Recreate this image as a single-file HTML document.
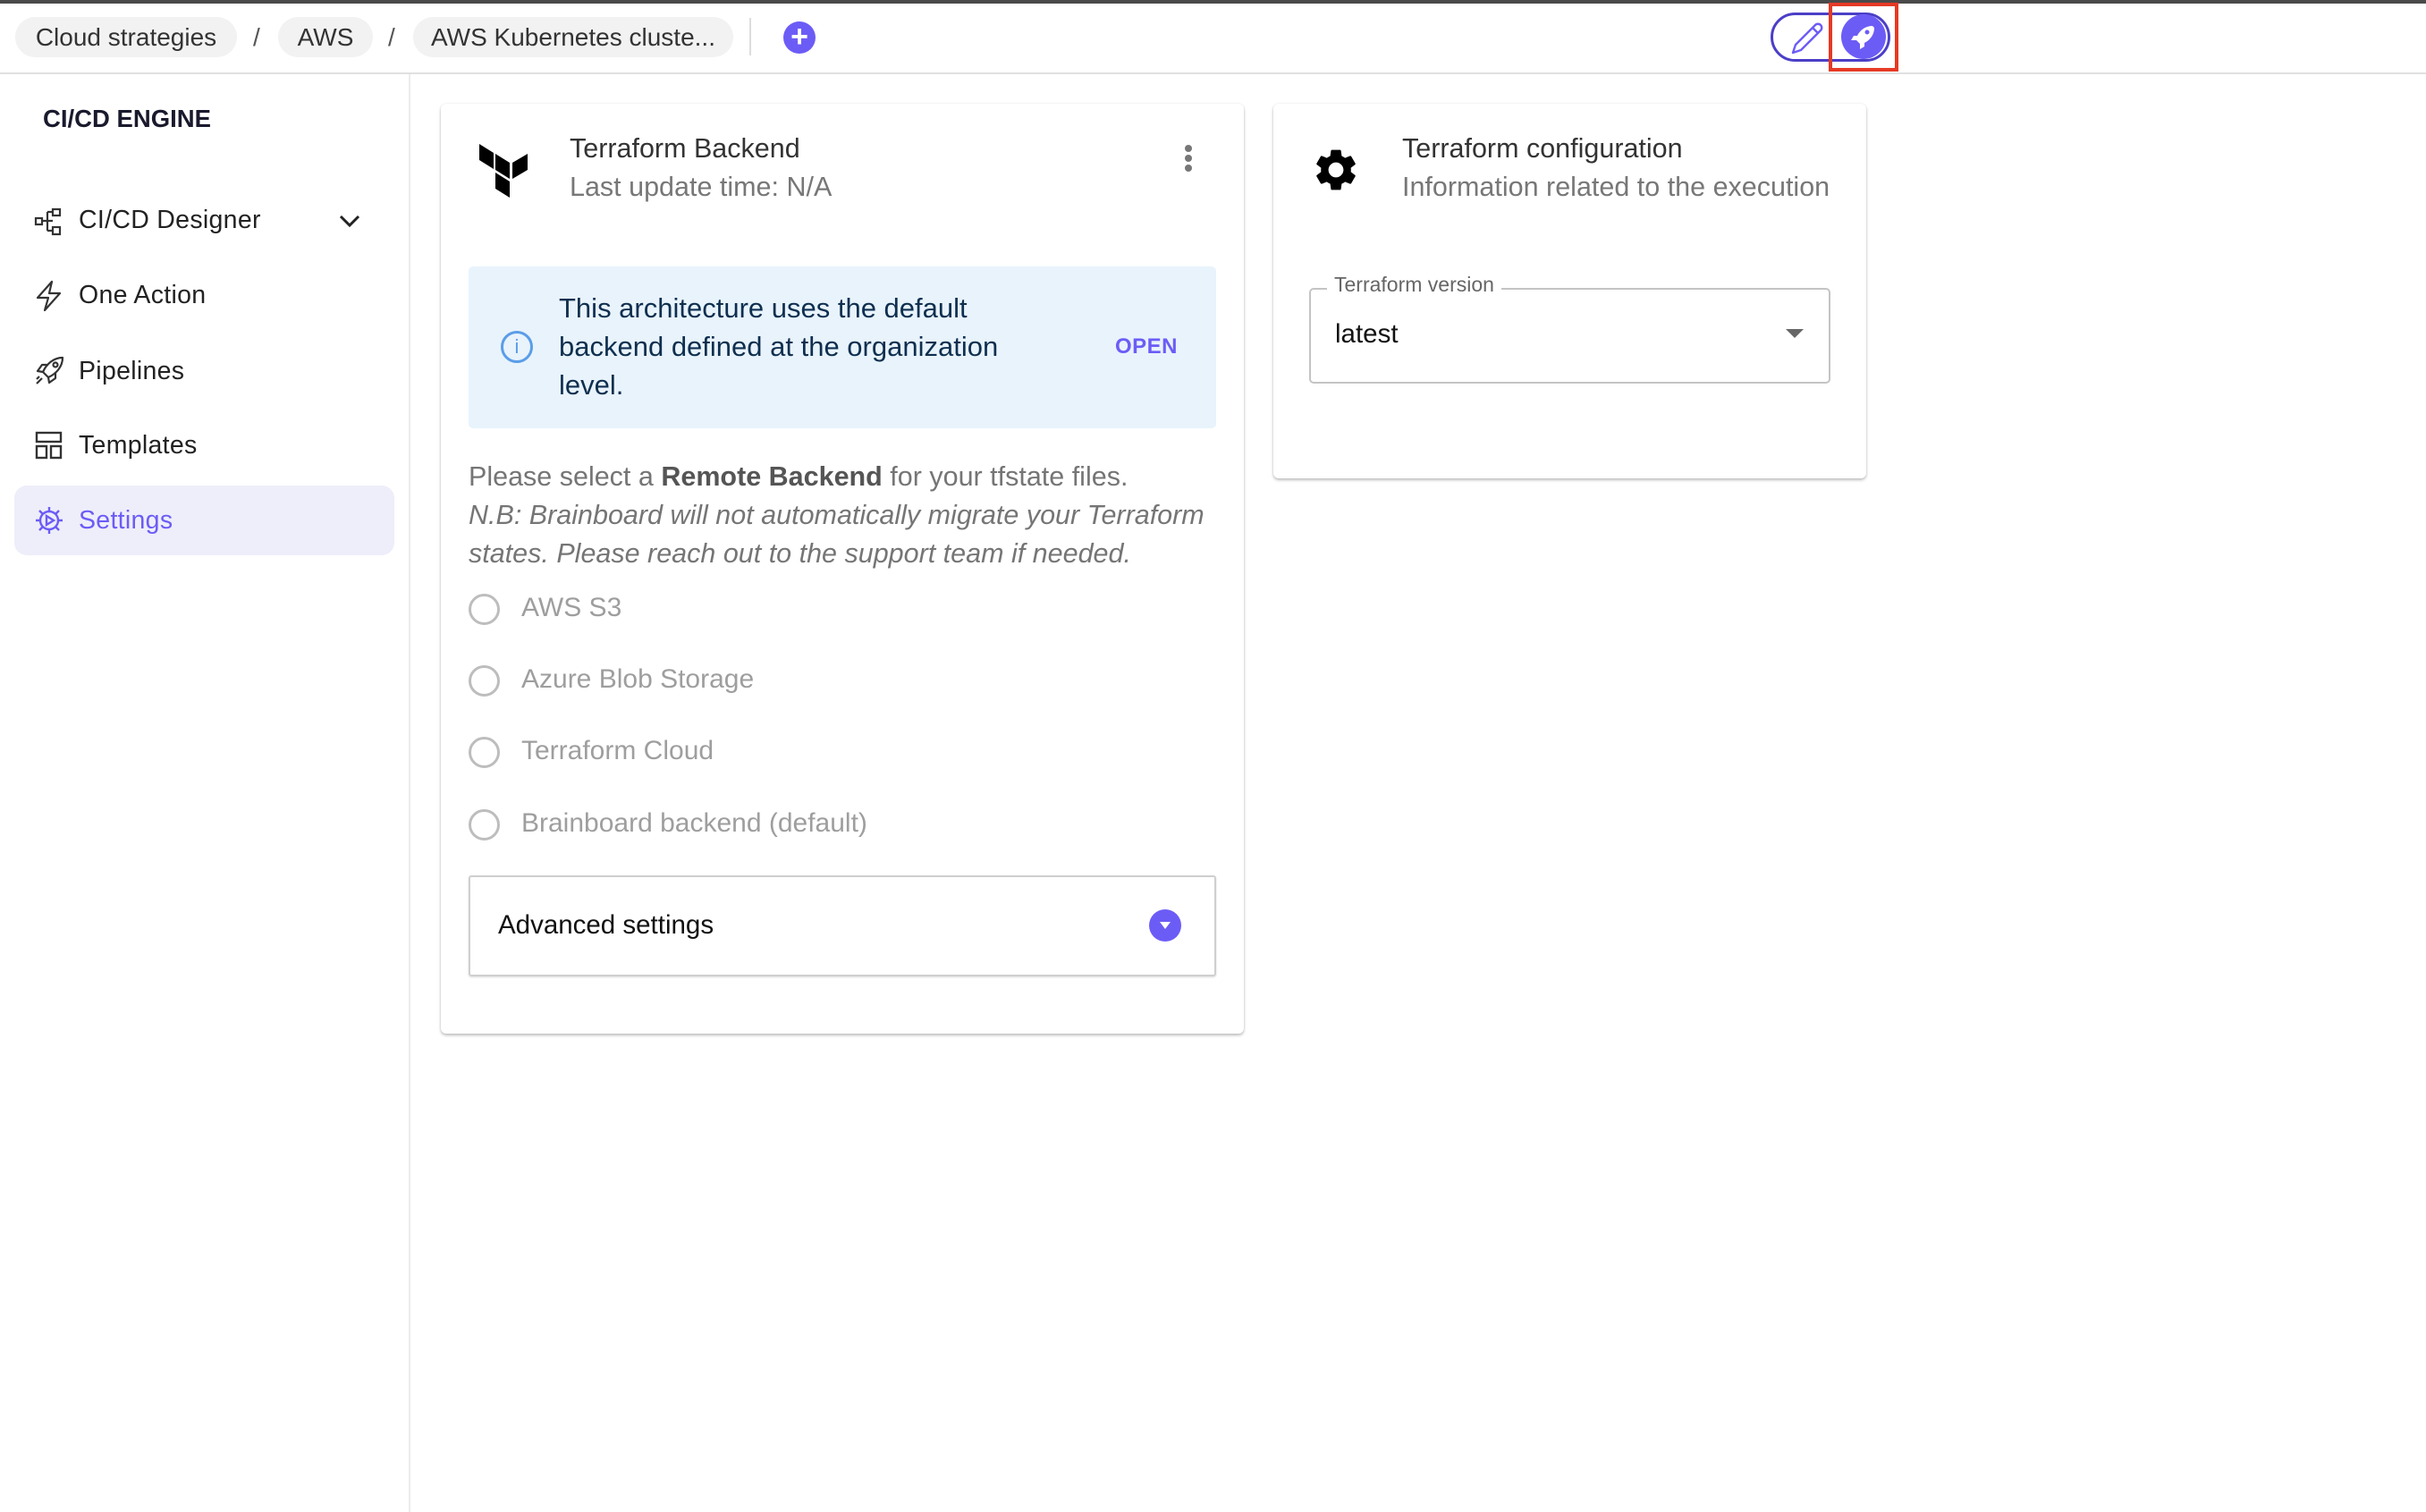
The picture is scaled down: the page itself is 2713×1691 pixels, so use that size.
<!DOCTYPE html>
<html><head><meta charset="utf-8"><style>
*{margin:0;padding:0;box-sizing:border-box}
body{width:2713px;height:1691px;background:#fff;font-family:"Liberation Sans",sans-serif;position:relative;overflow:hidden;color:#222}
.a{position:absolute;white-space:nowrap}
.pill{position:absolute;top:19px;height:45px;border-radius:23px;background:#f2f2f2;font-size:28px;color:#333;line-height:45px;text-align:center}
.sl{position:absolute;top:26px;font-size:28px;color:#555}
.mi{position:absolute;left:88px;font-size:28.5px;color:#222;letter-spacing:.3px}
.ic{position:absolute;left:38px}
.card{position:absolute;background:#fff;border-radius:6px;box-shadow:0 2px 3px rgba(0,0,0,.25),0 0 2px rgba(0,0,0,.08)}
.radio{position:absolute;left:524px;width:35px;height:35px;border:3px solid #bdbdbd;border-radius:50%}
.rl{position:absolute;left:583px;font-size:30px;color:#9e9e9e}
</style></head><body>
<div class="a" style="left:0;top:0;width:2713px;height:4px;background:#4a4a4a"></div>
<div class="a" style="left:0;top:81px;width:2713px;height:2px;background:#e0e0e0"></div>

<div class="pill" style="left:17px;width:248px">Cloud strategies</div>
<div class="sl" style="left:283px">/</div>
<div class="pill" style="left:311px;width:106px">AWS</div>
<div class="sl" style="left:434px">/</div>
<div class="pill" style="left:462px;width:358px">AWS Kubernetes cluste...</div>
<div class="a" style="left:838px;top:20px;width:2px;height:42px;background:#ddd"></div>
<div class="a" style="left:876px;top:24px;width:36px;height:36px;border-radius:50%;background:#6c5cf6;color:#fff;font-size:34px;line-height:35px;text-align:center;font-weight:bold">+</div>

<div class="a" style="left:1980px;top:14px;width:134px;height:55px;border:3px solid #4b3fc7;border-radius:28px"></div>
<svg class="a" style="left:2000px;top:22px" width="40" height="40" viewBox="0 0 40 40"><path d="M30 6 a4 4 0 0 1 6 6 L14 34 L5 37 L8 28 Z M27 9 L33 15" fill="none" stroke="#6c5cf6" stroke-width="2.4" stroke-linejoin="round"/></svg>
<div class="a" style="left:2059px;top:16px;width:50px;height:50px;border-radius:50%;background:#6c5cf6"></div>
<svg class="a" style="left:2066px;top:23px" width="36" height="36" viewBox="0 0 36 36"><path d="M28 6 C20 6 14 11 11 17 L7 17 L4 22 L10 22 L14 26 L14 32 L19 29 L19 25 C25 22 30 16 30 8 Z" fill="#fff"/><circle cx="22" cy="13" r="2.5" fill="#6c5cf6"/></svg>
<div class="a" style="left:2045px;top:3px;width:78px;height:77px;border:4px solid #e53a25"></div>

<div class="a" style="left:457px;top:83px;width:2px;height:1608px;background:#ececec"></div>
<div class="a" style="left:48px;top:117px;font-size:27.5px;font-weight:bold;color:#1a1a2e">CI/CD ENGINE</div>

<svg class="ic" style="top:231px" width="34" height="34" viewBox="0 0 34 34" fill="none" stroke="#333" stroke-width="2.2"><rect x="2" y="13" width="7" height="7"/><rect x="21" y="3" width="8" height="7"/><rect x="21" y="23" width="8" height="8"/><path d="M9 16 H15 M15 6 V27 M15 6 H21 M15 27 H21 M15 16 H21"/></svg>
<div class="mi" style="top:230px">CI/CD Designer</div>
<svg class="a" style="left:378px;top:238px" width="26" height="18" viewBox="0 0 26 18"><path d="M3 4 L13 14 L23 4" fill="none" stroke="#222" stroke-width="3"/></svg>

<svg class="ic" style="top:313px" width="34" height="36" viewBox="0 0 34 36" fill="none" stroke="#333" stroke-width="2.2" stroke-linejoin="round"><path d="M20 2 L4 20 H16 L12 34 L29 15 H17 Z"/></svg>
<div class="mi" style="top:314px">One Action</div>

<svg class="ic" style="top:397px" width="36" height="36" viewBox="0 0 36 36" fill="none" stroke="#333" stroke-width="2.2" stroke-linejoin="round"><path d="M32 3 C22 3 14 10 10 19 L16 25 C25 21 32 13 32 3 Z M10 19 L4 18 L9 11 L16 11 M16 25 L17 31 L24 26 L24 19"/><circle cx="24" cy="11" r="2.5"/><path d="M9 26 L3 32 M6 24 L3 27"/></svg>
<div class="mi" style="top:399px">Pipelines</div>

<svg class="ic" style="top:481px" width="34" height="34" viewBox="0 0 34 34" fill="none" stroke="#333" stroke-width="2.4"><rect x="3" y="3" width="27" height="10"/><rect x="3" y="18" width="11" height="13"/><rect x="19" y="18" width="11" height="13"/></svg>
<div class="mi" style="top:482px">Templates</div>

<div class="a" style="left:16px;top:543px;width:425px;height:78px;border-radius:14px;background:#eeeefa"></div>
<svg class="ic" style="top:565px" width="34" height="34" viewBox="0 0 34 34" fill="none" stroke="#6c5cf6" stroke-width="2.4"><circle cx="17" cy="17" r="10"/><path d="M17 2 V7 M17 27 V32 M2 17 H7 M27 17 H32 M6 6 L9.5 9.5 M24.5 24.5 L28 28 M28 6 L24.5 9.5 M9.5 24.5 L6 28 M14 12 L22 17 L14 22 Z"/></svg>
<div class="mi" style="top:566px;color:#6c5cf6">Settings</div>

<!-- Card 1 -->
<div class="card" style="left:493px;top:116px;width:898px;height:1040px"></div>
<svg class="a" style="left:536px;top:161px" width="56" height="60" viewBox="0 0 56 60"><path d="M0 0 L16 10 V28 L0 18 Z M18 11 L34 21 V39 L18 29 Z M37 21 L54 11 V29 L37 39 Z M18 32 L34 42 V60 L18 50 Z" fill="#000"/></svg>
<div class="a" style="left:637px;top:149px;font-size:30.5px;color:#333">Terraform Backend</div>
<div class="a" style="left:637px;top:192px;font-size:30.5px;color:#777">Last update time: N/A</div>
<div class="a" style="left:1325px;top:162px;width:8px;height:8px;border-radius:50%;background:#777;box-shadow:0 11px 0 #777,0 22px 0 #777"></div>

<div class="a" style="left:524px;top:298px;width:836px;height:181px;background:#e8f3fc;border-radius:5px"></div>
<div class="a" style="left:560px;top:370px;width:36px;height:36px;border:3px solid #5a9de8;border-radius:50%;color:#5a9de8;font-size:22px;text-align:center;line-height:30px">i</div>
<div class="a" style="left:625px;top:323px;font-size:31px;color:#0f2f4f;line-height:43px">This architecture uses the default<br>backend defined at the organization<br>level.</div>
<div class="a" style="left:1247px;top:374px;font-size:24px;color:#6c5cf6;font-weight:bold;letter-spacing:.5px">OPEN</div>

<div class="a" style="left:524px;top:512px;font-size:30.5px;color:#757575;line-height:43px">Please select a <b style="color:#555">Remote Backend</b> for your tfstate files.<br><i>N.B: Brainboard will not automatically migrate your Terraform<br>states. Please reach out to the support team if needed.</i></div>

<div class="radio" style="top:664px"></div><div class="rl" style="top:663px">AWS S3</div>
<div class="radio" style="top:744px"></div><div class="rl" style="top:743px">Azure Blob Storage</div>
<div class="radio" style="top:824px"></div><div class="rl" style="top:823px">Terraform Cloud</div>
<div class="radio" style="top:905px"></div><div class="rl" style="top:904px">Brainboard backend (default)</div>

<div class="a" style="left:524px;top:979px;width:836px;height:113px;border:2px solid #cfcfcf;border-radius:3px;box-shadow:0 1px 2px rgba(0,0,0,.15)"></div>
<div class="a" style="left:557px;top:1018px;font-size:29.5px;color:#111">Advanced settings</div>
<div class="a" style="left:1285px;top:1017px;width:36px;height:36px;border-radius:50%;background:#6c5cf6"></div>
<svg class="a" style="left:1295px;top:1029px" width="16" height="12" viewBox="0 0 16 12"><path d="M2 2 H14 L8 10 Z" fill="#fff"/></svg>

<!-- Card 2 -->
<div class="card" style="left:1424px;top:116px;width:663px;height:419px"></div>
<svg class="a" style="left:1466px;top:162px" width="56" height="56" viewBox="0 0 24 24"><path fill="#000" d="M19.14 12.94c.04-.3.06-.61.06-.94 0-.32-.02-.64-.07-.94l2.030-1.58c.18-.14.23-.41.12-.61l-1.92-3.32c-.12-.22-.37-.29-.59-.22l-2.39.96c-.5-.38-1.03-.7-1.62-.94l-.36-2.54c-.04-.24-.24-.41-.48-.41h-3.84c-.24 0-.43.17-.47.41l-.36 2.54c-.59.24-1.13.57-1.62.94l-2.39-.96c-.22-.08-.47 0-.59.22L2.74 8.87c-.12.21-.08.47.12.61l2.03 1.58c-.05.3-.09.63-.09.94s.02.64.07.94l-2.03 1.58c-.18.14-.23.41-.12.61l1.92 3.32c.12.22.37.29.59.22l2.39-.96c.5.38 1.030.7 1.62.94l.36 2.54c.05.24.24.41.48.41h3.84c.24 0 .44-.17.47-.41l.36-2.54c.59-.24 1.13-.56 1.62-.94l2.39.96c.22.08.47 0 .59-.22l1.92-3.32c.12-.22.07-.47-.12-.61l-2.01-1.58zM12 15.6c-1.98 0-3.6-1.62-3.6-3.6s1.62-3.6 3.6-3.6 3.6 1.62 3.6 3.6-1.62 3.6-3.6 3.6z"/></svg>
<div class="a" style="left:1568px;top:149px;font-size:30.5px;color:#333">Terraform configuration</div>
<div class="a" style="left:1568px;top:192px;font-size:30.5px;color:#777">Information related to the execution</div>

<div class="a" style="left:1464px;top:322px;width:583px;height:107px;border:2px solid #c4c4c4;border-radius:5px"></div>
<div class="a" style="left:1484px;top:305px;padding:0 8px;background:#fff;font-size:23px;color:#666">Terraform version</div>
<div class="a" style="left:1493px;top:357px;font-size:29.5px;color:#111">latest</div>
<svg class="a" style="left:1997px;top:368px" width="20" height="12" viewBox="0 0 20 12"><path d="M0 0 H20 L10 10 Z" fill="#666"/></svg>
</body></html>
